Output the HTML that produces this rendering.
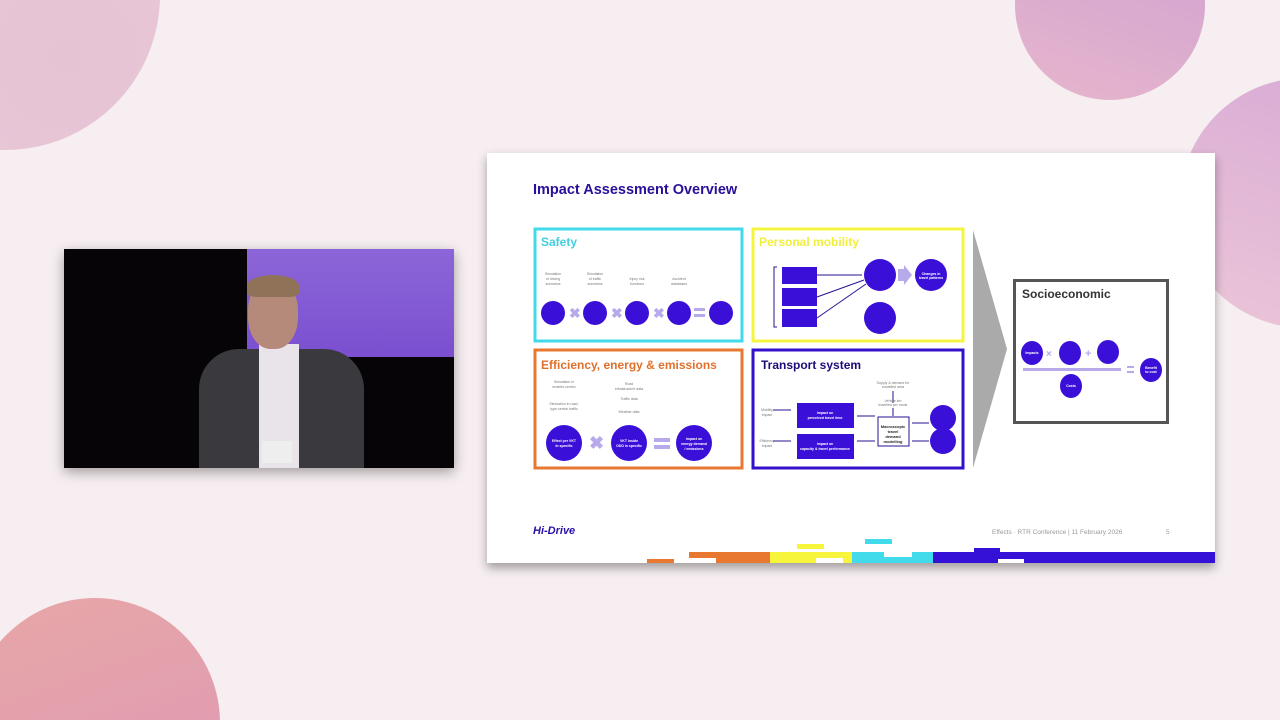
<!DOCTYPE html>
<html><head><meta charset="utf-8"><style>
html,body{margin:0;padding:0;width:1280px;height:720px;overflow:hidden;background:#f6eef0;font-family:"Liberation Sans",sans-serif}
#w{position:relative;width:1280px;height:720px;overflow:hidden;background:#f6eef0}
.c{position:absolute;border-radius:50%}
</style></head><body><div id="w">
<div class="c" style="left:-150px;top:-160px;width:310px;height:310px;background:radial-gradient(circle at 70% 70%,#e6c3d3,#e9cadb)"></div>
<div class="c" style="left:1015px;top:-90px;width:190px;height:190px;background:linear-gradient(200deg,#cf9fd2,#e6b6cc)"></div>
<div class="c" style="left:1180px;top:78px;width:250px;height:250px;background:linear-gradient(200deg,#d7a9d6,#ecc6d7)"></div>
<div class="c" style="left:-30px;top:598px;width:250px;height:250px;background:linear-gradient(160deg,#e7a7a6,#de97b6)"></div>

<div style="position:absolute;left:64px;top:249px;width:390px;height:219px;background:#060406;box-shadow:0 4px 12px rgba(0,0,0,.35);overflow:hidden">
 <div style="position:absolute;left:183px;top:0;width:207px;height:108px;background:linear-gradient(180deg,#8c66d8,#7b4fd0)"></div>
 <div style="position:absolute;left:135px;top:100px;width:165px;height:119px;background:#3a3a3e;border-radius:40px 40px 0 0"></div>
 <div style="position:absolute;left:195px;top:95px;width:40px;height:124px;background:#e8e4ea"></div>
 <div style="position:absolute;left:184px;top:30px;width:50px;height:70px;background:#b58a7a;border-radius:45%"></div>
 <div style="position:absolute;left:183px;top:26px;width:52px;height:22px;background:#8f7258;border-radius:50% 50% 20% 20%"></div>
 <div style="position:absolute;left:198px;top:192px;width:30px;height:22px;background:#eee"></div>
</div>

<svg width="1280" height="720" viewBox="0 0 1280 720" style="position:absolute;left:0;top:0" font-family="Liberation Sans, sans-serif">
<defs><filter id="sh" x="-5%" y="-5%" width="110%" height="115%"><feDropShadow dx="0" dy="5" stdDeviation="5" flood-color="#000" flood-opacity=".35"/></filter></defs>
<rect x="487" y="153" width="728" height="410" fill="#fff" filter="url(#sh)"/>
<text x="533" y="194" font-size="14.5" font-weight="bold" fill="#2a0f9a">Impact Assessment Overview</text>

<rect x="535" y="229" width="207" height="112" fill="none" stroke="#42d9ea" stroke-width="3"/>
<rect x="753" y="229" width="210" height="112" fill="none" stroke="#f5f43e" stroke-width="3"/>
<rect x="535" y="350" width="207" height="118" fill="none" stroke="#e8772f" stroke-width="3"/>
<rect x="753" y="350" width="210" height="118" fill="none" stroke="#3510cc" stroke-width="3"/>
<path d="M973 230L1007 349L973 468Z" fill="#a9aaa9"/>
<rect x="1014.5" y="280.5" width="153" height="142" fill="#fff" stroke="#555" stroke-width="3"/>
<text x="1022" y="298" font-size="12" font-weight="bold" fill="#333">Socioeconomic</text>
<text x="541" y="246" font-size="12" font-weight="bold" fill="#42cfe0">Safety</text>
<text x="759" y="246" font-size="12" font-weight="bold" fill="#f0ef3c">Personal mobility</text>
<text x="541" y="369" font-size="12" font-weight="bold" fill="#e0702a">Efficiency, energy &amp; emissions</text>
<text x="761" y="369" font-size="12" font-weight="bold" fill="#1d0b7a">Transport system</text>

<g fill="#3a0fd8">
<circle cx="553" cy="313" r="12"/><circle cx="595" cy="313" r="12"/><circle cx="637" cy="313" r="12"/><circle cx="679" cy="313" r="12"/><circle cx="721" cy="313" r="12"/>
<rect x="782" y="267" width="35" height="17"/><rect x="782" y="288" width="35" height="18"/><rect x="782" y="309" width="35" height="18"/>
<circle cx="880" cy="275" r="16"/><circle cx="931" cy="275" r="16"/><circle cx="880" cy="318" r="16"/>
<circle cx="564" cy="443" r="18"/><circle cx="629" cy="443" r="18"/><circle cx="694" cy="443" r="18"/>
<rect x="797" y="403" width="57" height="25"/><rect x="797" y="434" width="57" height="25"/>
<circle cx="943" cy="418" r="13"/><circle cx="943" cy="441" r="13"/>
<ellipse cx="1032" cy="353" rx="11" ry="12"/><ellipse cx="1070" cy="353" rx="11" ry="12"/><ellipse cx="1108" cy="352" rx="11" ry="12"/><ellipse cx="1071" cy="386" rx="11" ry="12"/><ellipse cx="1151" cy="370" rx="11" ry="12"/>
</g>
<g fill="#b7a9ea" font-size="14" font-weight="bold">
<text x="569" y="318">✖</text><text x="611" y="318">✖</text><text x="653" y="318">✖</text>
<rect x="694" y="308" width="11" height="3"/><rect x="694" y="314" width="11" height="3"/>
<text x="589" y="449" font-size="18">✖</text>
<rect x="654" y="438" width="16" height="4"/><rect x="654" y="445" width="16" height="4"/>
<path d="M898 269h6v-4l8 10-8 10v-4h-6z"/>
<rect x="1023" y="368" width="98" height="3"/>
<text x="1046" y="357" font-size="10">×</text><text x="1085" y="357" font-size="11">+</text>
<rect x="1127" y="366" width="7" height="2"/><rect x="1127" y="371" width="7" height="2"/>
</g>
<g stroke="#2a1090" stroke-width="1" fill="none">
<path d="M817 275H862M817 297L864 280M817 318L866 284"/>
<path d="M777 267h-3v60h3"/>
<path d="M773 410h18M773 441h18M857 416h18M857 441h18M912 423h17M912 441h17M893 391v12M893 408v8"/>
<rect x="878" y="417" width="31" height="29" fill="#fff"/>
</g>
<g fill="#777" font-size="3.5" text-anchor="middle">
<text x="553" y="275">Simulation</text><text x="553" y="280">of driving</text><text x="553" y="285">scenarios</text>
<text x="595" y="275">Simulation</text><text x="595" y="280">of traffic</text><text x="595" y="285">scenarios</text>
<text x="637" y="280">Injury risk</text><text x="637" y="285">functions</text>
<text x="679" y="280">Accident</text><text x="679" y="285">databases</text>
<text x="564" y="383">Simulation in</text><text x="564" y="388">enabler-centric</text><text x="564" y="405">Simulation in road-</text><text x="564" y="410">type-centric traffic</text>
<text x="629" y="385">Road</text><text x="629" y="390">infrastructure data</text><text x="629" y="400">Traffic data</text><text x="629" y="413">Weather data</text>
<text x="893" y="384">Supply &amp; demand for</text><text x="893" y="388">modelled area</text><text x="893" y="402">Vehicle km</text><text x="893" y="406">travelled per mode</text>
<text x="767" y="411">Mobility</text><text x="767" y="416">impact</text><text x="767" y="442">Efficiency</text><text x="767" y="447">impact</text>
</g>
<g fill="#fff" font-size="3.5" text-anchor="middle" font-weight="bold">
<text x="825" y="414">Impact on</text><text x="825" y="419">perceived travel time</text>
<text x="825" y="445">Impact on</text><text x="825" y="450">capacity &amp; travel performance</text>
<text x="564" y="442">Effect per VKT</text><text x="564" y="447">in specific</text>
<text x="629" y="442">VKT inside</text><text x="629" y="447">ODD in specific</text>
<text x="694" y="440">Impact on</text><text x="694" y="445">energy demand</text><text x="694" y="450">/ emissions</text>
<text x="931" y="275">Changes in</text><text x="931" y="279">travel patterns</text>
<text x="1032" y="354">Impacts</text><text x="1071" y="387">Costs</text><text x="1151" y="369">Benefit</text><text x="1151" y="373">to cost</text>
</g>
<g fill="#222" font-size="4" text-anchor="middle" font-weight="bold"><text x="893" y="428">Macroscopic</text><text x="893" y="433">travel</text><text x="893" y="438">demand</text><text x="893" y="443">modelling</text></g>

<text x="533" y="534" font-size="11" font-weight="bold" font-style="italic" fill="#2a0fa8">Hi-Drive</text>
<text x="992" y="534" font-size="6.5" fill="#999">Effects · RTR Conference | 11 February 2026</text>
<text x="1166" y="534" font-size="6.5" fill="#999">5</text>
<rect x="647" y="559" width="27" height="4" fill="#e8772f"/>
<rect x="689" y="552" width="81" height="11" fill="#e8772f"/><rect x="689" y="558" width="27" height="5" fill="#fff"/>
<rect x="770" y="552" width="82" height="11" fill="#f6f53c"/><rect x="797" y="544" width="27" height="5" fill="#f6f53c"/><rect x="816" y="558" width="27" height="5" fill="#fff"/>
<rect x="852" y="552" width="81" height="11" fill="#42dbec"/><rect x="884" y="552" width="28" height="5" fill="#fff"/><rect x="865" y="539" width="27" height="5" fill="#42dbec"/>
<rect x="933" y="552" width="282" height="11" fill="#3510d6"/><rect x="974" y="548" width="26" height="5" fill="#3510d6"/><rect x="998" y="559" width="26" height="4" fill="#fff"/>
</svg>
</div></body></html>
